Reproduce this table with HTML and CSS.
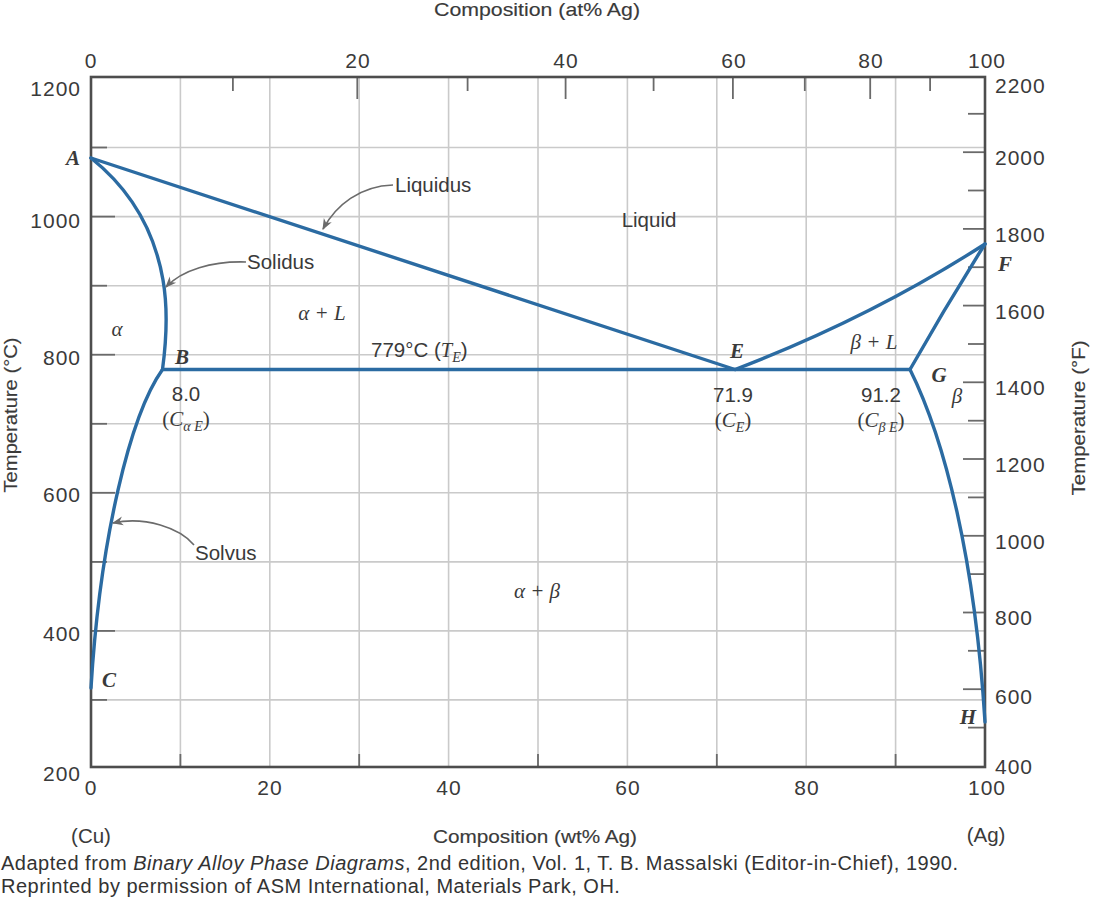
FILE: index.html
```html
<!DOCTYPE html>
<html lang="en">
<head>
<meta charset="utf-8">
<title>Cu–Ag phase diagram</title>
<link rel="stylesheet" href="styles.css">
</head>
<body>
<div class="figure">
<svg class="chart" width="1107" height="852" viewBox="0 0 1107 852" xmlns="http://www.w3.org/2000/svg">
  <defs>
    <marker id="ah" viewBox="0 0 10 10" refX="9" refY="5" markerWidth="7" markerHeight="7" orient="auto">
      <path class="ahead" d="M0,1 L10,5 L0,9 L3,5 Z"/>
    </marker>
  </defs>

  <!-- grid -->
  <g class="grid">
    <line x1="180.4" y1="77" x2="180.4" y2="767"/>
    <line x1="269.8" y1="77" x2="269.8" y2="767"/>
    <line x1="359.2" y1="77" x2="359.2" y2="767"/>
    <line x1="448.6" y1="77" x2="448.6" y2="767"/>
    <line x1="538" y1="77" x2="538" y2="767"/>
    <line x1="627.4" y1="77" x2="627.4" y2="767"/>
    <line x1="716.8" y1="77" x2="716.8" y2="767"/>
    <line x1="806.2" y1="77" x2="806.2" y2="767"/>
    <line x1="895.6" y1="77" x2="895.6" y2="767"/>
    <line x1="91" y1="147.5" x2="985" y2="147.5"/>
    <line x1="91" y1="216.6" x2="985" y2="216.6"/>
    <line x1="91" y1="285.7" x2="985" y2="285.7"/>
    <line x1="91" y1="354.7" x2="985" y2="354.7"/>
    <line x1="91" y1="423.8" x2="985" y2="423.8"/>
    <line x1="91" y1="492.8" x2="985" y2="492.8"/>
    <line x1="91" y1="561.9" x2="985" y2="561.9"/>
    <line x1="91" y1="630.9" x2="985" y2="630.9"/>
    <line x1="91" y1="699.9" x2="985" y2="699.9"/>
  </g>

  <!-- ticks -->
  <g class="tick">
    <!-- left °C -->
    <line x1="91" y1="147.5" x2="107" y2="147.5"/>
    <line x1="91" y1="216.6" x2="115" y2="216.6"/>
    <line x1="91" y1="285.7" x2="107" y2="285.7"/>
    <line x1="91" y1="354.7" x2="115" y2="354.7"/>
    <line x1="91" y1="423.8" x2="107" y2="423.8"/>
    <line x1="91" y1="492.8" x2="115" y2="492.8"/>
    <line x1="91" y1="561.9" x2="107" y2="561.9"/>
    <line x1="91" y1="630.9" x2="115" y2="630.9"/>
    <line x1="91" y1="699.9" x2="107" y2="699.9"/>
    <!-- right °F -->
    <line x1="968" y1="113.8" x2="985" y2="113.8"/>
    <line x1="963" y1="152.2" x2="985" y2="152.2"/>
    <line x1="968" y1="190.5" x2="985" y2="190.5"/>
    <line x1="963" y1="228.9" x2="985" y2="228.9"/>
    <line x1="968" y1="267.2" x2="985" y2="267.2"/>
    <line x1="963" y1="305.6" x2="985" y2="305.6"/>
    <line x1="968" y1="344" x2="985" y2="344"/>
    <line x1="963" y1="382.3" x2="985" y2="382.3"/>
    <line x1="968" y1="420.7" x2="985" y2="420.7"/>
    <line x1="963" y1="459" x2="985" y2="459"/>
    <line x1="968" y1="497.4" x2="985" y2="497.4"/>
    <line x1="963" y1="535.8" x2="985" y2="535.8"/>
    <line x1="968" y1="574.1" x2="985" y2="574.1"/>
    <line x1="963" y1="612.5" x2="985" y2="612.5"/>
    <line x1="968" y1="650.8" x2="985" y2="650.8"/>
    <line x1="963" y1="689.2" x2="985" y2="689.2"/>
    <line x1="968" y1="727.6" x2="985" y2="727.6"/>
    <!-- top at% -->
    <line x1="232.9" y1="77" x2="232.9" y2="91"/>
    <line x1="357.3" y1="77" x2="357.3" y2="99"/>
    <line x1="467.6" y1="77" x2="467.6" y2="91"/>
    <line x1="565.6" y1="77" x2="565.6" y2="99"/>
    <line x1="653.6" y1="77" x2="653.6" y2="91"/>
    <line x1="732.9" y1="77" x2="732.9" y2="99"/>
    <line x1="804.8" y1="77" x2="804.8" y2="91"/>
    <line x1="870.2" y1="77" x2="870.2" y2="99"/>
    <line x1="930.1" y1="77" x2="930.1" y2="91"/>
    <!-- bottom wt% -->
    <line x1="180.4" y1="767" x2="180.4" y2="754"/>
    <line x1="359.2" y1="767" x2="359.2" y2="754"/>
    <line x1="538" y1="767" x2="538" y2="754"/>
    <line x1="716.8" y1="767" x2="716.8" y2="754"/>
    <line x1="895.6" y1="767" x2="895.6" y2="754"/>
  </g>

  <rect class="frame" x="91" y="77" width="894" height="690"/>

  <!-- phase boundaries -->
  <g class="curve">
    <path d="M91,158 L735,369.5"/>
    <path d="M91,158 Q150,205 163,280 Q169.5,317.5 162.5,369.5"/>
    <path d="M162.5,369.5 C130,415 100,540 91,688"/>
    <path d="M162.5,369.5 L910,369.5"/>
    <path d="M735,369.5 Q870,318 985,244"/>
    <path d="M910,369.5 Q946,306 985,244"/>
    <path d="M910,369.5 C945,440 975,560 985,722"/>
  </g>

  <!-- leader arrows -->
  <g class="arrow">
    <path d="M393,185 C360,186 336,205 323,229" marker-end="url(#ah)"/>
    <path d="M246,262 C212,261 182,270 166,287" marker-end="url(#ah)"/>
    <path d="M194,545 C180,528 145,516 113,523" marker-end="url(#ah)"/>
  </g>

  <!-- axis titles -->
  <text class="title" x="537" y="16" text-anchor="middle" textLength="206" lengthAdjust="spacingAndGlyphs">Composition (at% Ag)</text>
  <text class="title" x="535" y="843" text-anchor="middle" textLength="204" lengthAdjust="spacingAndGlyphs">Composition (wt% Ag)</text>
  <text class="title vt" transform="translate(17,415) rotate(-90)" text-anchor="middle" textLength="155" lengthAdjust="spacingAndGlyphs">Temperature (°C)</text>
  <text class="title vt" transform="translate(1085,418) rotate(-90)" text-anchor="middle" textLength="155" lengthAdjust="spacingAndGlyphs">Temperature (°F)</text>
  <text class="word" x="91" y="843" text-anchor="middle">(Cu)</text>
  <text class="word" x="986" y="842" text-anchor="middle">(Ag)</text>

  <!-- top numbers (at%) -->
  <g class="num" text-anchor="middle">
    <text x="91" y="67.5">0</text>
    <text x="358" y="67.5">20</text>
    <text x="566" y="67.5">40</text>
    <text x="734" y="67.5">60</text>
    <text x="871" y="67.5">80</text>
    <text x="987" y="67.5">100</text>
  </g>
  <!-- bottom numbers (wt%) -->
  <g class="num" text-anchor="middle">
    <text x="91" y="794.5">0</text>
    <text x="270" y="794.5">20</text>
    <text x="449" y="794.5">40</text>
    <text x="628" y="794.5">60</text>
    <text x="807" y="794.5">80</text>
    <text x="987" y="794.5">100</text>
  </g>
  <!-- left numbers (°C) -->
  <g class="num" text-anchor="end">
    <text x="81" y="95.5">1200</text>
    <text x="81" y="227.5">1000</text>
    <text x="81" y="364.5">800</text>
    <text x="81" y="501.5">600</text>
    <text x="81" y="640.5">400</text>
    <text x="81" y="780.5">200</text>
  </g>
  <!-- right numbers (°F) -->
  <g class="num">
    <text x="995" y="92.5">2200</text>
    <text x="995" y="164.5">2000</text>
    <text x="995" y="241.5">1800</text>
    <text x="995" y="318.5">1600</text>
    <text x="995" y="394.5">1400</text>
    <text x="995" y="471.5">1200</text>
    <text x="995" y="548.5">1000</text>
    <text x="995" y="624.5">800</text>
    <text x="995" y="703.5">600</text>
    <text x="995" y="773.5">400</text>
  </g>

  <!-- region and curve labels -->
  <text class="word" x="395" y="192">Liquidus</text>
  <text class="word" x="649" y="227" text-anchor="middle">Liquid</text>
  <text class="word" x="247" y="269">Solidus</text>
  <text class="word" x="195" y="560">Solvus</text>

  <text class="greek" x="117" y="336" text-anchor="middle">α</text>
  <text class="greek" x="322" y="320" text-anchor="middle">α + <tspan class="it">L</tspan></text>
  <text class="greek" x="874" y="349" text-anchor="middle">β + <tspan class="it">L</tspan></text>
  <text class="greek" x="957" y="403" text-anchor="middle">β</text>
  <text class="greek" x="537" y="598" text-anchor="middle">α + β</text>

  <text class="word" x="371" y="357">779°C (<tspan class="it">T</tspan><tspan class="sub" dy="5">E</tspan><tspan dy="-5">)</tspan></text>

  <text class="word" x="186" y="401" text-anchor="middle">8.0</text>
  <text class="paren" x="186" y="426" text-anchor="middle">(<tspan class="it">C</tspan><tspan class="sub" dy="5">α E</tspan><tspan dy="-5">)</tspan></text>
  <text class="word" x="733" y="402" text-anchor="middle">71.9</text>
  <text class="paren" x="733" y="427" text-anchor="middle">(<tspan class="it">C</tspan><tspan class="sub" dy="5">E</tspan><tspan dy="-5">)</tspan></text>
  <text class="word" x="881" y="402" text-anchor="middle">91.2</text>
  <text class="paren" x="881" y="427" text-anchor="middle">(<tspan class="it">C</tspan><tspan class="sub" dy="5">β E</tspan><tspan dy="-5">)</tspan></text>

  <g class="pt" text-anchor="middle">
    <text x="73" y="165">A</text>
    <text x="182" y="364">B</text>
    <text x="109" y="687">C</text>
    <text x="737" y="358">E</text>
    <text x="1005" y="271">F</text>
    <text x="939" y="382">G</text>
    <text x="968" y="724">H</text>
  </g>
</svg>
<div class="caption">
  <p>Adapted from <em>Binary Alloy Phase Diagrams</em>, 2nd edition, Vol. 1, T. B. Massalski (Editor-in-Chief), 1990.</p>
  <p>Reprinted by permission of ASM International, Materials Park, OH.</p>
</div>
</div>
</body>
</html>
```
FILE: styles.css
```css
html, body {
  margin: 0;
  padding: 0;
  background: #ffffff;
}
.figure {
  width: 1107px;
  height: 903px;
  overflow: hidden;
}
.chart {
  display: block;
}
.grid line {
  stroke: #cacaca;
  stroke-width: 1.6;
}
.tick line {
  stroke: #6a6a6a;
  stroke-width: 1.8;
}
.frame {
  fill: none;
  stroke: #4d4d4d;
  stroke-width: 2.6;
}
.curve path {
  fill: none;
  stroke: #2b6ba2;
  stroke-width: 3.4;
  stroke-linejoin: round;
  stroke-linecap: round;
}
.arrow path {
  fill: none;
  stroke: #6b6b6b;
  stroke-width: 1.6;
}
.ahead {
  fill: #6b6b6b;
}
text {
  fill: #3a3a3a;
}
.title {
  font-family: "Liberation Sans", Arial, sans-serif;
  font-size: 19px;
  stroke: #3a3a3a;
  stroke-width: 0.15;
}
.vt {
  font-size: 18px;
}
.num {
  font-family: "Liberation Sans", Arial, sans-serif;
  font-size: 21px;
  letter-spacing: 1px;
}
.word {
  font-family: "Liberation Sans", Arial, sans-serif;
  font-size: 20.5px;
}
.greek {
  font-family: "Liberation Serif", "Times New Roman", serif;
  font-style: italic;
  font-size: 21px;
}
.paren {
  font-family: "Liberation Serif", "Times New Roman", serif;
  font-size: 21px;
}
.it {
  font-family: "Liberation Serif", "Times New Roman", serif;
  font-style: italic;
}
.sub {
  font-family: "Liberation Serif", "Times New Roman", serif;
  font-style: italic;
  font-size: 14px;
}
.pt {
  font-family: "Liberation Serif", "Times New Roman", serif;
  font-style: italic;
  font-weight: bold;
  font-size: 21px;
}
.caption {
  font-family: "Liberation Sans", Arial, sans-serif;
  font-size: 20px;
  line-height: 23px;
  letter-spacing: 0.5px;
  color: #333333;
  padding-left: 1px;
}
.caption p {
  margin: 0;
  white-space: nowrap;
}
.caption em {
  font-style: italic;
}
```
